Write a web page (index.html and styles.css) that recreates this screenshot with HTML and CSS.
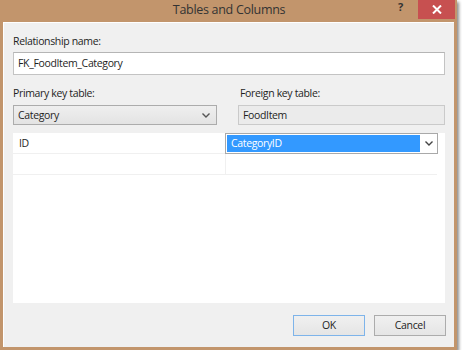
FILE: index.html
```html
<!DOCTYPE html>
<html>
<head>
<meta charset="utf-8">
<link rel="stylesheet" href="styles.css">
</head>
<body>
<div class="window">
  <div class="titlebar">
    <div class="title">Tables and Columns</div>
    <div class="help">?</div>
    <div class="close">
      <svg width="10" height="9" viewBox="0 0 10 9"><path d="M1 0.5 L9 8.5 M9 0.5 L1 8.5" stroke="#fff" stroke-width="2"/></svg>
    </div>
  </div>
  <div class="client">
    <div class="label">Relationship name:</div>
    <div class="textbox">FK_FoodItem_Category</div>
    <div class="cols">
      <div class="col left">
        <div class="label">Primary key table:</div>
        <div class="select">
          <span>Category</span>
          <svg class="chev" width="8" height="5" viewBox="0 0 8 5"><path d="M0.5 0.5 L4 4 L7.5 0.5" fill="none" stroke="#555" stroke-width="1.4"/></svg>
        </div>
      </div>
      <div class="col right">
        <div class="label">Foreign key table:</div>
        <div class="readonly">FoodItem</div>
      </div>
    </div>
    <div class="grid">
      <div class="row">
        <div class="cell">ID</div>
        <div class="cell edit">
          <div class="combo">
            <div class="hl">CategoryID</div>
            <svg class="chev" width="8" height="5" viewBox="0 0 8 5"><path d="M0.5 0.5 L4 4 L7.5 0.5" fill="none" stroke="#444" stroke-width="1.4"/></svg>
          </div>
        </div>
      </div>
      <div class="row">
        <div class="cell"></div>
        <div class="cell"></div>
      </div>
    </div>
    <div class="buttons">
      <div class="btn default">OK</div>
      <div class="btn">Cancel</div>
    </div>
  </div>
</div>
</body>
</html>
```
FILE: styles.css
```css
html, body {
  margin: 0;
  padding: 0;
  background: #ffffff;
}
body {
  font-family: "Open Sans", "Noto Sans", sans-serif;
  font-size: 10.5px;
  letter-spacing: -0.35px;
  color: #1e1e1e;
}
.window {
  width: 457px;
  height: 350px;
  box-sizing: border-box;
  background: #c2956c;
  padding: 0 3px 3px 3px;
  box-shadow: 2px 2px 3px rgba(0,0,0,0.45);
  display: flex;
  flex-direction: column;
}
.titlebar {
  height: 22px;
  display: flex;
  align-items: flex-start;
}
.title {
  flex: 1;
  text-align: center;
  font-size: 12.5px;
  letter-spacing: -0.3px;
  line-height: 19px;
  color: #333;
  padding-left: 57px;
}
.help {
  width: 12px;
  font-size: 11px;
  font-weight: bold;
  color: #333;
  line-height: 14px;
  margin-right: 8px;
}
.close {
  width: 37px;
  height: 19px;
  margin-right: -1px;
  background: #c75050;
  display: flex;
  align-items: center;
  justify-content: center;
}
.client {
  flex: 1;
  background: #f0f0f0;
  border-top: 1px solid #fff;
  border-left: 1px solid #fff;
  padding: 10px 9px 0 9px;
  display: flex;
  flex-direction: column;
}
.label {
  height: 16px;
  line-height: 16px;
}
.textbox {
  margin-top: 3px;
  height: 23px;
  box-sizing: border-box;
  border: 1px solid #c3c3c3;
  border-top-color: #b5b5b5;
  background: #fff;
  padding-left: 4px;
  line-height: 21px;
}
.cols {
  display: flex;
  margin-top: 10px;
}
.col.left {
  width: 204px;
}
.col.right {
  margin-left: 21px;
  width: 207px;
}
.col.right .label {
  padding-left: 2px;
}
.select, .readonly {
  margin-top: 4px;
  height: 20px;
  box-sizing: border-box;
  line-height: 18px;
  padding-left: 4px;
}
.select {
  border: 1px solid #acacac;
  background: linear-gradient(#efefef, #e3e3e3);
  display: flex;
  justify-content: space-between;
  align-items: center;
  padding-right: 6px;
}
.readonly {
  border: 1px solid #cacaca;
  background: #ebebeb;
}
.chev {
  display: block;
}
.grid {
  margin-top: 8px;
  height: 170px;
  background: #fff;
}
.row {
  display: flex;
  height: 20px;
  width: 424px;
  border-bottom: 1px solid #f0f0f0;
}
.cell {
  width: 212px;
  box-sizing: border-box;
  line-height: 20px;
  padding-left: 6px;
}
.cell + .cell {
  border-left: 1px solid #f0f0f0;
  padding-left: 0;
}
.cell.edit {
  position: relative;
  border-left: none;
}
.combo {
  position: absolute;
  left: 0;
  top: 0;
  width: 213px;
  height: 21px;
  box-sizing: border-box;
  border: 1px solid #a9a9a9;
  background: #fff;
  display: flex;
  align-items: center;
  padding: 1px;
}
.hl {
  width: 193px;
  height: 17px;
  background: #3399ff;
  color: #fff;
  line-height: 17px;
  padding-left: 4px;
  box-sizing: border-box;
}
.combo .chev {
  margin-left: 5px;
}
.buttons {
  margin-top: 12px;
  display: flex;
  justify-content: flex-end;
  gap: 9px;
}
.btn {
  width: 72px;
  height: 21px;
  box-sizing: border-box;
  border: 1px solid #acacac;
  background: linear-gradient(#f0f0f0, #e5e5e5);
  text-align: center;
  line-height: 19px;
  margin-right: -1px;
}
.btn.default {
  border-color: #7eb4ea;
  margin-right: 0;
}
```
